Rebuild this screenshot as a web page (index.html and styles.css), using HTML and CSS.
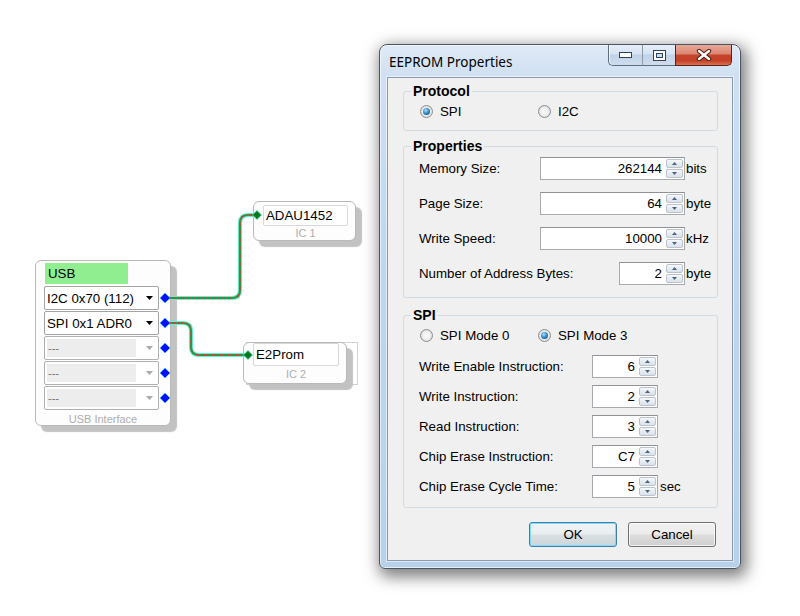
FILE: index.html
```html
<!DOCTYPE html>
<html>
<head>
<meta charset="utf-8">
<link rel="stylesheet" href="styles.css">
</head>
<body>
<div class="canvas">
  <div class="node usb">
    <div class="usb-title">USB</div>
    <div class="combos">
      <div class="combo"><span class="ctext">I2C 0x70 (112)</span><svg class="carrow" width="7" height="4" viewBox="0 0 7 4"><path d="M0 0H7L3.5 4Z" fill="#000"/></svg></div>
      <div class="combo"><span class="ctext">SPI 0x1 ADR0</span><svg class="carrow" width="7" height="4" viewBox="0 0 7 4"><path d="M0 0H7L3.5 4Z" fill="#000"/></svg></div>
      <div class="combo dis"><span class="cfield">---</span><svg class="carrow" width="7" height="4" viewBox="0 0 7 4"><path d="M0 0H7L3.5 4Z" fill="#a9a9a9"/></svg></div>
      <div class="combo dis"><span class="cfield">---</span><svg class="carrow" width="7" height="4" viewBox="0 0 7 4"><path d="M0 0H7L3.5 4Z" fill="#a9a9a9"/></svg></div>
      <div class="combo dis"><span class="cfield">---</span><svg class="carrow" width="7" height="4" viewBox="0 0 7 4"><path d="M0 0H7L3.5 4Z" fill="#a9a9a9"/></svg></div>
    </div>
    <div class="node-caption usb-caption">USB Interface</div>
  </div>

  <div class="node ic ic1">
    <div class="field">ADAU1452</div>
    <div class="node-caption">IC 1</div>
  </div>

  <div class="ic2-frame"></div>
  <div class="node ic ic2">
    <div class="field">E2Prom</div>
    <div class="node-caption">IC 2</div>
  </div>

  <svg class="wires" width="380" height="616" viewBox="0 0 380 616">
    <g fill="none" stroke-linecap="round" stroke-linejoin="round">
      <path d="M165 298H232Q240 298 240 290V223Q240 215 248 215H257" stroke="#62f2cf" stroke-width="4.2"/>
      <path d="M165 323H183Q191 323 191 331V347Q191 355 199 355H248" stroke="#62f2cf" stroke-width="4.2"/>
      <path d="M165 298H232Q240 298 240 290V223Q240 215 248 215H257" stroke="#1f9e4b" stroke-width="2.2"/>
      <path d="M165 323H183Q191 323 191 331V347Q191 355 199 355H248" stroke="#1f9e4b" stroke-width="2.2"/>
      <path d="M165 298H232Q240 298 240 290V223Q240 215 248 215H257" stroke="#ff2b2b" stroke-width="1.3" stroke-dasharray="3 2 1 2" stroke-linecap="butt"/>
      <path d="M165 323H183Q191 323 191 331V347Q191 355 199 355H248" stroke="#ff2b2b" stroke-width="1.3" stroke-dasharray="3 2 1 2" stroke-linecap="butt"/>
    </g>
    <g fill="#0010ff" stroke="#3fb8ff" stroke-width="0.7">
      <path d="M165 293L170 298L165 303L160 298Z"/>
      <path d="M165 318L170 323L165 328L160 323Z"/>
      <path d="M165 343L170 348L165 353L160 348Z"/>
      <path d="M165 368L170 373L165 378L160 373Z"/>
      <path d="M165 393L170 398L165 403L160 398Z"/>
    </g>
    <g fill="#007a1c" stroke="#3fe0b0" stroke-width="0.7">
      <path d="M257 210.5L261.5 215L257 219.5L252.5 215Z"/>
      <path d="M248 350.5L252.5 355L248 359.5L243.5 355Z"/>
    </g>
  </svg>

  <div class="dialog">
    <div class="titlebar">
      <span class="title">EEPROM Properties</span>
      <div class="caption">
        <span class="cbtn min"><svg width="13" height="6" viewBox="0 0 13 6"><rect x="0.5" y="0.5" width="12" height="5" fill="#fff" stroke="#33435a"/></svg></span>
        <span class="cbtn max"><svg width="13" height="11" viewBox="0 0 13 11"><rect x="0.5" y="0.5" width="12" height="10" fill="#fff" stroke="#33435a"/><rect x="3.5" y="3.5" width="6" height="4" fill="#c9dbef" stroke="#33435a"/></svg></span>
        <span class="cbtn close"><svg width="16" height="12" viewBox="0 0 16 12"><path d="M3 2L13 10M13 2L3 10" stroke="#4a1d12" stroke-width="4.4" stroke-linecap="round"/><path d="M3 2L13 10M13 2L3 10" stroke="#fff" stroke-width="2.4" stroke-linecap="round"/></svg></span>
      </div>
    </div>
    <div class="client">
      <fieldset class="group protocol">
        <legend>Protocol</legend>
        <div class="radios">
          <label class="radio first"><span class="rb on"></span>SPI</label>
          <label class="radio"><span class="rb"></span>I2C</label>
        </div>
      </fieldset>

      <fieldset class="group props">
        <legend>Properties</legend>
        <div class="rows">
          <div class="row"><span class="lbl">Memory Size:</span><div class="spin wide"><span class="val">262144</span><span class="sbtns"><span><svg width="5" height="3" viewBox="0 0 5 3"><path d="M0 3L2.5 0L5 3Z" fill="#4d6383"/></svg></span><span><svg width="5" height="3" viewBox="0 0 5 3"><path d="M0 0L2.5 3L5 0Z" fill="#4d6383"/></svg></span></span></div><span class="unit">bits</span></div>
          <div class="row"><span class="lbl">Page Size:</span><div class="spin wide"><span class="val">64</span><span class="sbtns"><span><svg width="5" height="3" viewBox="0 0 5 3"><path d="M0 3L2.5 0L5 3Z" fill="#4d6383"/></svg></span><span><svg width="5" height="3" viewBox="0 0 5 3"><path d="M0 0L2.5 3L5 0Z" fill="#4d6383"/></svg></span></span></div><span class="unit">byte</span></div>
          <div class="row"><span class="lbl">Write Speed:</span><div class="spin wide"><span class="val">10000</span><span class="sbtns"><span><svg width="5" height="3" viewBox="0 0 5 3"><path d="M0 3L2.5 0L5 3Z" fill="#4d6383"/></svg></span><span><svg width="5" height="3" viewBox="0 0 5 3"><path d="M0 0L2.5 3L5 0Z" fill="#4d6383"/></svg></span></span></div><span class="unit">kHz</span></div>
          <div class="row"><span class="lbl">Number of Address Bytes:</span><div class="spin small"><span class="val">2</span><span class="sbtns"><span><svg width="5" height="3" viewBox="0 0 5 3"><path d="M0 3L2.5 0L5 3Z" fill="#4d6383"/></svg></span><span><svg width="5" height="3" viewBox="0 0 5 3"><path d="M0 0L2.5 3L5 0Z" fill="#4d6383"/></svg></span></span></div><span class="unit">byte</span></div>
        </div>
      </fieldset>

      <fieldset class="group spi">
        <legend>SPI</legend>
        <div class="radios">
          <label class="radio first"><span class="rb"></span>SPI Mode 0</label>
          <label class="radio"><span class="rb on"></span>SPI Mode 3</label>
        </div>
        <div class="rows tight">
          <div class="row"><span class="lbl fixed">Write Enable Instruction:</span><div class="spin small"><span class="val">6</span><span class="sbtns"><span><svg width="5" height="3" viewBox="0 0 5 3"><path d="M0 3L2.5 0L5 3Z" fill="#4d6383"/></svg></span><span><svg width="5" height="3" viewBox="0 0 5 3"><path d="M0 0L2.5 3L5 0Z" fill="#4d6383"/></svg></span></span></div></div>
          <div class="row"><span class="lbl fixed">Write Instruction:</span><div class="spin small"><span class="val">2</span><span class="sbtns"><span><svg width="5" height="3" viewBox="0 0 5 3"><path d="M0 3L2.5 0L5 3Z" fill="#4d6383"/></svg></span><span><svg width="5" height="3" viewBox="0 0 5 3"><path d="M0 0L2.5 3L5 0Z" fill="#4d6383"/></svg></span></span></div></div>
          <div class="row"><span class="lbl fixed">Read Instruction:</span><div class="spin small"><span class="val">3</span><span class="sbtns"><span><svg width="5" height="3" viewBox="0 0 5 3"><path d="M0 3L2.5 0L5 3Z" fill="#4d6383"/></svg></span><span><svg width="5" height="3" viewBox="0 0 5 3"><path d="M0 0L2.5 3L5 0Z" fill="#4d6383"/></svg></span></span></div></div>
          <div class="row"><span class="lbl fixed">Chip Erase Instruction:</span><div class="spin small"><span class="val">C7</span><span class="sbtns"><span><svg width="5" height="3" viewBox="0 0 5 3"><path d="M0 3L2.5 0L5 3Z" fill="#4d6383"/></svg></span><span><svg width="5" height="3" viewBox="0 0 5 3"><path d="M0 0L2.5 3L5 0Z" fill="#4d6383"/></svg></span></span></div></div>
          <div class="row"><span class="lbl fixed">Chip Erase Cycle Time:</span><div class="spin small"><span class="val">5</span><span class="sbtns"><span><svg width="5" height="3" viewBox="0 0 5 3"><path d="M0 3L2.5 0L5 3Z" fill="#4d6383"/></svg></span><span><svg width="5" height="3" viewBox="0 0 5 3"><path d="M0 0L2.5 3L5 0Z" fill="#4d6383"/></svg></span></span></div><span class="unit sec">sec</span></div>
        </div>
      </fieldset>

      <div class="buttons">
        <button class="btn def">OK</button>
        <button class="btn">Cancel</button>
      </div>
    </div>
  </div>
</div>
</body>
</html>
```

FILE: styles.css
```css
* { box-sizing: border-box; }

body {
  margin: 0;
  background: #fff;
  font-family: "Liberation Sans", Arial, sans-serif;
  font-size: 13.3px;
  color: #000;
}

.canvas {
  position: relative;
  width: 800px;
  height: 616px;
  overflow: hidden;
  background: #fff;
}

/* ---------- diagram nodes ---------- */
.node {
  position: absolute;
  background: #fdfdfd;
  border: 1px solid #b9b9b9;
  border-radius: 6px;
  box-shadow: 6px 6px 1px #c2c2c2;
  z-index: 1;
}

.usb {
  left: 35px;
  top: 260px;
  width: 136px;
  height: 166px;
  display: flex;
  flex-direction: column;
  padding: 2px 0 0 8px;
}

.usb-title {
  margin-left: 1px;
  width: 83px;
  height: 21px;
  line-height: 21px;
  padding-left: 3px;
  background: #90ee90;
}

.combos {
  margin-top: 2px;
  display: flex;
  flex-direction: column;
  gap: 1px;
}

.combo {
  width: 115px;
  height: 24px;
  border: 1px solid #a3a3a3;
  border-radius: 2px;
  background: #fff;
  display: flex;
  align-items: center;
  padding: 0 5px 0 2px;
}

.ctext { flex: 1; white-space: nowrap; }

.carrow { flex: none; }

.combo.dis {
  border-color: #b0b0b0;
  padding: 2px 5px 2px 2px;
}

.cfield {
  width: 89px;
  height: 100%;
  margin-right: 10px;
  background: #ededed;
  color: #707070;
  font-size: 11px;
  line-height: 18px;
  padding-left: 1px;
}

.node-caption {
  text-align: center;
  font-size: 11px;
  line-height: 13px;
  color: #aeaeae;
}

.usb-caption {
  margin-left: -8px;
  margin-top: 3px;
}

.ic {
  display: flex;
  flex-direction: column;
}

.ic1 {
  left: 253px;
  top: 201px;
  width: 103px;
  height: 40px;
  padding: 3px 7px 0 9px;
}

.ic2 {
  left: 243px;
  top: 342px;
  width: 104px;
  height: 42px;
  padding: 0 7px 0 9px;
}

.field {
  height: 21px;
  line-height: 19px;
  padding-left: 2px;
  background: #fff;
  border: 1px solid #d8d8d8;
  border-radius: 2px;
  white-space: nowrap;
}

.ic2 .field { height: 23px; line-height: 21px; }

.ic1 .node-caption { margin-top: 1px; }
.ic2 .node-caption { margin-top: 2px; }

.ic2-frame {
  position: absolute;
  left: 246px;
  top: 342px;
  width: 112px;
  height: 43px;
  border: 1px solid #d2d2d2;
  z-index: 0;
}

.wires {
  position: absolute;
  left: 0;
  top: 0;
  z-index: 2;
}

/* ---------- dialog window ---------- */
.dialog {
  position: absolute;
  left: 379px;
  top: 44px;
  width: 362px;
  height: 525px;
  border: 1px solid #4b5462;
  border-radius: 8px 8px 6px 6px;
  background: linear-gradient(180deg, #dfeaf6 0%, #cfe0f2 6%, #c0d7ee 40%, #b8d1ea 100%);
  box-shadow: 3px 5px 15px 3px rgba(0, 0, 0, 0.5), inset 0 0 0 1px rgba(255, 255, 255, 0.6);
  display: flex;
  flex-direction: column;
  padding: 0 7px 7px 7px;
  z-index: 3;
}

.titlebar {
  height: 32px;
  display: flex;
  flex: none;
}

.title {
  align-self: center;
  padding-left: 2px;
  font-family: "Noto Sans", "Open Sans", sans-serif;
  font-size: 13.5px;
  color: #000;
  margin-top: 1px;
}

.caption {
  margin-left: auto;
  margin-right: 1px;
  display: flex;
  height: 21px;
  align-self: flex-start;
}

.cbtn {
  display: flex;
  align-items: center;
  justify-content: center;
  height: 21px;
  border: 1px solid #5e6d80;
  border-top: none;
}

.cbtn.min {
  width: 34px;
  border-radius: 0 0 0 5px;
  border-right: none;
  background: linear-gradient(180deg, #e6eef8 0%, #d6e3f2 45%, #c0d2e8 50%, #cfdcec 100%);
  box-shadow: inset 1px 0 0 rgba(255,255,255,0.7);
}

.cbtn.max {
  width: 33px;
  border-left: 1px solid #8c9aac;
  border-right: none;
  background: linear-gradient(180deg, #e6eef8 0%, #d6e3f2 45%, #c0d2e8 50%, #cfdcec 100%);
}

.cbtn.close {
  width: 57px;
  border-color: #5a2317;
  border-radius: 0 0 5px 0;
  background: linear-gradient(180deg, #e9a896 0%, #dc8672 45%, #c5452c 50%, #c44126 78%, #dc7051 100%);
}

.client {
  flex: 1;
  background: #f0f0f0;
  border: 1px solid #8a9bb0;
  box-shadow: 0 0 0 1px rgba(255, 255, 255, 0.55);
  display: flex;
  flex-direction: column;
}

/* ---------- group boxes ---------- */
.group {
  margin: 0 14px 0 15px;
  border: 1px solid #d3dbe2;
  border-radius: 3px;
  padding: 0;
  min-width: 0;
}

.group legend {
  margin-left: 7px;
  padding: 0 2px;
  font-size: 14px;
  font-weight: bold;
  line-height: 17px;
  height: 17px;
}

.protocol { margin-top: 5px; padding: 1px 0 9px 0; }
.props { margin-top: 7px; padding: 2px 0 12px 0; }
.spi { margin-top: 9px; padding: 1px 0 9px 0; }

.radios {
  display: flex;
  align-items: center;
  height: 20px;
  padding-left: 16px;
}

.radio {
  display: flex;
  align-items: center;
  gap: 7px;
}

.radio.first { width: 118px; }

.rb {
  width: 13px;
  height: 13px;
  border-radius: 50%;
  border: 1px solid #8b8d8f;
  background: radial-gradient(circle at 50% 50%, #fbfbfb 0%, #f1f1f1 45%, #d9d9d9 80%, #cfcfcf 100%);
  display: grid;
  place-items: center;
  flex: none;
}

.rb.on::after {
  content: "";
  width: 7px;
  height: 7px;
  border-radius: 50%;
  background: radial-gradient(circle at 40% 35%, #b6e4f8 0%, #4aa0d8 35%, #185f99 75%, #0e3f6e 100%);
}

.rows {
  display: flex;
  flex-direction: column;
  gap: 12px;
  padding-left: 15px;
}

.rows.tight {
  gap: 7px;
  margin-top: 10px;
}

.row {
  display: flex;
  align-items: center;
  height: 23px;
}

.lbl { flex: 1; white-space: nowrap; }
.lbl.fixed { flex: none; width: 173px; }

.spin {
  display: flex;
  height: 23px;
  padding: 1px;
  background: #fff;
  border: 1px solid #a7aaaf;
  border-top-color: #8f9297;
}

.spin.wide { width: 145px; }
.spin.small { width: 66px; }

.val {
  flex: 1;
  text-align: right;
  padding-right: 4px;
  line-height: 19px;
}

.sbtns {
  width: 17px;
  display: flex;
  flex-direction: column;
  gap: 1px;
}

.sbtns > span {
  flex: 1;
  display: flex;
  align-items: center;
  justify-content: center;
  border: 1px solid #bcc3cc;
  border-radius: 2px;
  background: linear-gradient(180deg, #f7f9fb 0%, #e6ebf0 50%, #dbe2ea 100%);
}

.unit {
  width: 32px;
  padding-left: 1px;
  white-space: nowrap;
}

.unit.sec { margin-left: 1px; }

/* ---------- buttons ---------- */
.buttons {
  display: flex;
  justify-content: flex-end;
  gap: 11px;
  margin: 14px 16px 0 0;
}

.btn {
  width: 88px;
  height: 25px;
  border: 1px solid #707070;
  border-radius: 3px;
  background: linear-gradient(180deg, #f2f2f2 0%, #ebebeb 48%, #dddddd 52%, #cfcfcf 100%);
  box-shadow: inset 0 0 0 1px rgba(255, 255, 255, 0.75);
  font-family: "Liberation Sans", Arial, sans-serif;
  font-size: 13.3px;
  color: #000;
  padding: 0;
}

.btn.def {
  border-color: #3c7fb1;
  box-shadow: inset 0 0 0 1px #7fdcf8;
  background: linear-gradient(180deg, #f0f4f6 0%, #e8edf0 48%, #d9e0e4 52%, #cdd5da 100%);
}
```
